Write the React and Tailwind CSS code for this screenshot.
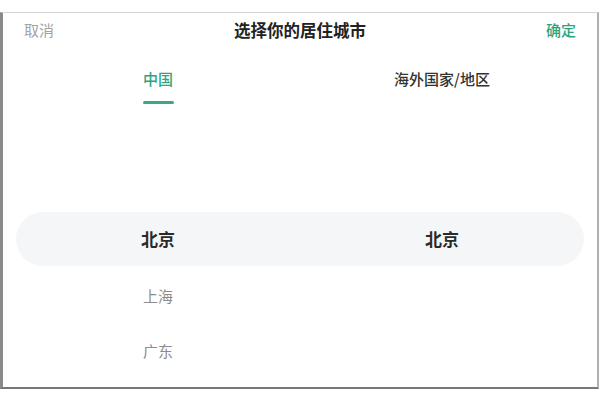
const cities = ['上海', '广东'];

export default function App() {
  return (
    <div className="w-[600px] h-[400px] bg-white pt-[12px] font-['Noto_Sans_CJK_SC',sans-serif]">
      <div className="w-[599px] h-[377px] border-l-[3px] border-l-[#8a8a8a] border-t border-t-[#d4d4d4] border-r-2 border-r-[#b0b0b0] border-b-2 border-b-[#777] flex flex-col">
        {/* top bar */}
        <div className="h-[34px] px-[21px] flex items-center justify-between">
          <span className="text-[15px] text-[#a3a3a3]">取消</span>
          <span className="text-[16.5px] font-bold text-[#222]">选择你的居住城市</span>
          <span className="text-[15px] font-medium text-[#2fa47c]">确定</span>
        </div>

        {/* tabs */}
        <div className="grid grid-cols-2 px-[13px] pt-[20px]">
          <div className="flex flex-col items-center">
            <span className="text-[15px] font-medium leading-[24px] text-[#2fa47c]">中国</span>
            <span className="mt-[10px] w-[31px] h-[3px] rounded-full bg-[#3aa886]" />
          </div>
          <div className="flex flex-col items-center">
            <span className="text-[15px] font-medium leading-[24px] text-[#333]">海外国家/地区</span>
          </div>
        </div>

        {/* picker */}
        <div className="px-[13px] pt-[108px]">
          <div className="h-[54px] rounded-full bg-[#f5f6f8] grid grid-cols-2 items-center">
            <span className="text-center text-[17px] font-bold text-[#2a2a2a]">北京</span>
            <span className="text-center text-[17px] font-bold text-[#2a2a2a]">北京</span>
          </div>
          <div className="pt-[3px]">
            {cities.map((c) => (
              <div key={c} className="grid grid-cols-2 h-[55px] items-center">
                <span className="text-center text-[15px] text-[#8c8c8c]">{c}</span>
                <span />
              </div>
            ))}
          </div>
        </div>
      </div>
    </div>
  );
}
